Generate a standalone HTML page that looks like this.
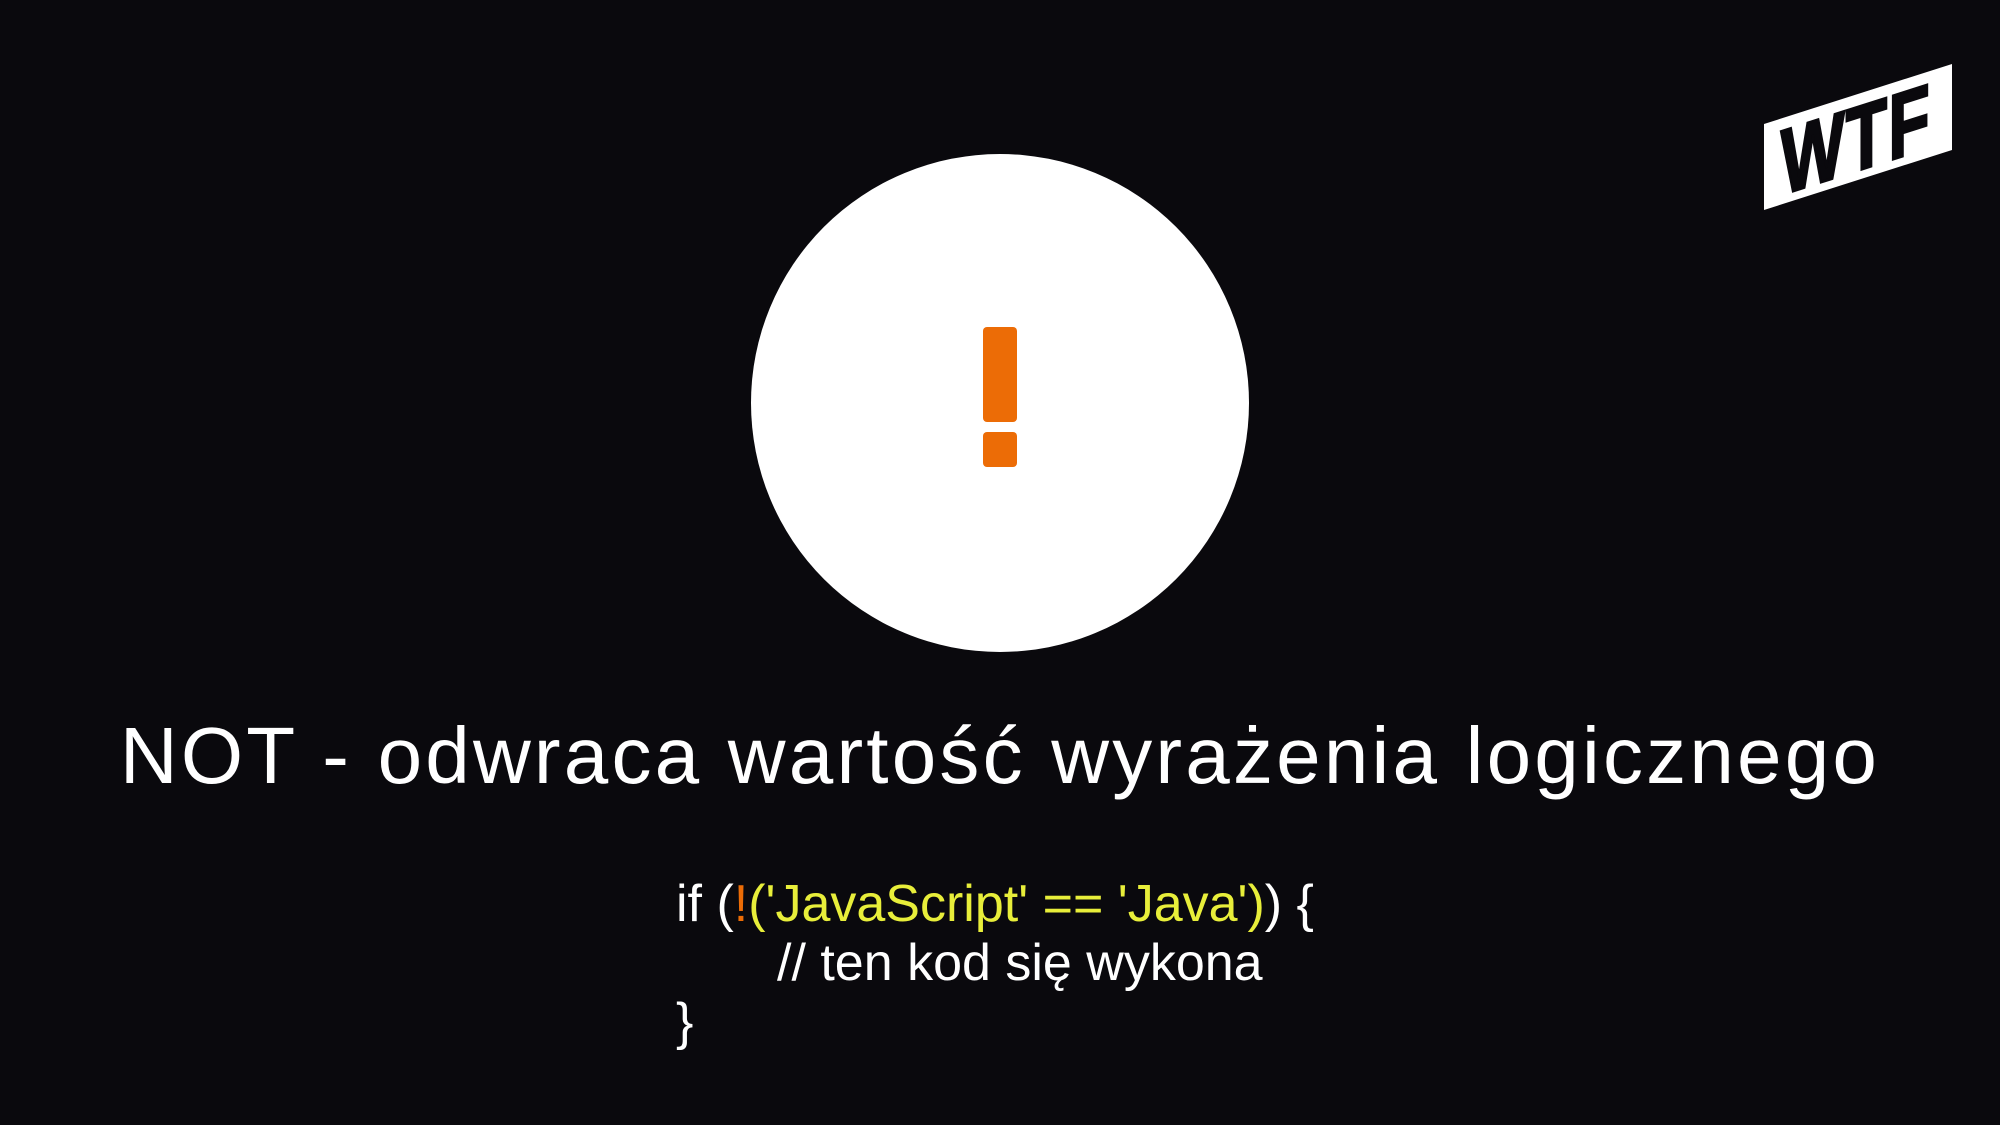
<!DOCTYPE html>
<html><head><meta charset="utf-8"><style>
html,body{margin:0;padding:0;background:#0a090d;width:2000px;height:1125px;overflow:hidden;position:relative}
.c{position:absolute;left:751px;top:154px;width:498px;height:498px;border-radius:50%;background:#fff}
.bar{position:absolute;left:983px;top:327px;width:34px;height:95px;background:#ec6c06;border-radius:4px}
.dot{position:absolute;left:983px;top:432px;width:34px;height:35px;background:#ec6c06;border-radius:4px}
.t{position:absolute;left:0;width:2000px;top:706px;text-align:center;color:#fff;font-family:"Liberation Sans",sans-serif;font-size:80px;line-height:100px;white-space:nowrap;letter-spacing:3.2px}
.code{position:absolute;left:676px;top:875px;color:#fff;font-family:"Liberation Sans",sans-serif;font-size:52px;line-height:59px;white-space:nowrap}
.code div{height:59px}
.y{color:#e8ee3a}.o{color:#ec6c06}
</style></head><body>
<div class="c"></div><div class="bar"></div><div class="dot"></div>
<div class="t">NOT - odwraca wartość wyrażenia logicznego</div>
<div class="code"><div>if (<span class="o">!</span><span class="y">('JavaScript' == 'Java')</span>) {</div><div style="padding-left:101px">// ten kod się wykona</div><div>}</div></div>
<svg style="position:absolute;left:0;top:0" width="2000" height="1125">
<polygon points="1764,124 1952,64 1952,150 1764,210" fill="#fff"/>
<g transform="translate(1856,140) skewY(-17.7)">
<text x="0" y="31" text-anchor="middle" font-family="Liberation Sans" font-weight="bold" font-size="92" fill="#0a090d" stroke="#0a090d" stroke-width="3" letter-spacing="2" textLength="150" lengthAdjust="spacingAndGlyphs">WTF</text>
</g>
</svg>
</body></html>
